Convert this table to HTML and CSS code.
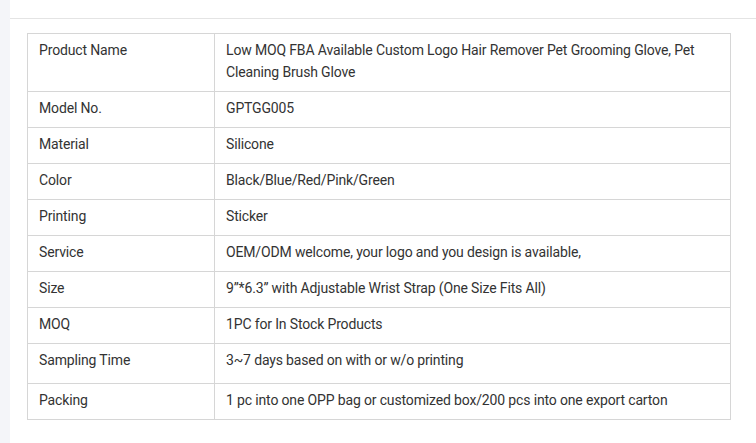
FILE: index.html
```html
<!DOCTYPE html>
<html lang="en">
<head>
<meta charset="utf-8">
<title>Product specifications</title>
<link rel="stylesheet" href="styles.css">
</head>
<body>
<div class="panel">
  <div class="panel-top"></div>
  <div class="panel-body">
    <table class="spec">
      <tbody>
        <tr><td class="key">Product Name</td><td class="val">Low MOQ FBA Available Custom Logo Hair Remover Pet Grooming Glove, Pet Cleaning Brush Glove</td></tr>
        <tr><td class="key">Model No.</td><td class="val">GPTGG005</td></tr>
        <tr><td class="key">Material</td><td class="val">Silicone</td></tr>
        <tr><td class="key">Color</td><td class="val">Black/Blue/Red/Pink/Green</td></tr>
        <tr><td class="key">Printing</td><td class="val">Sticker</td></tr>
        <tr><td class="key">Service</td><td class="val">OEM/ODM welcome, your logo and you design is available,</td></tr>
        <tr><td class="key">Size</td><td class="val">9”*6.3” with Adjustable Wrist Strap (One Size Fits All)</td></tr>
        <tr><td class="key">MOQ</td><td class="val">1PC for In Stock Products</td></tr>
        <tr class="tall"><td class="key">Sampling Time</td><td class="val">3~7 days based on with or w/o printing</td></tr>
        <tr><td class="key">Packing</td><td class="val">1 pc into one OPP bag or customized box/200 pcs into one export carton</td></tr>
      </tbody>
    </table>
  </div>
</div>
</body>
</html>
```
FILE: styles.css
```css
html, body {
  margin: 0;
  padding: 0;
}
body {
  background: #f4f5f9;
  font-family: Roboto, "Liberation Sans", Arial, sans-serif;
  font-size: 14px;
  letter-spacing: -0.15px;
  color: #333333;
  min-height: 443px;
}
.panel {
  margin-left: 10px;
  background: #ffffff;
  min-height: 443px;
}
.panel-top {
  height: 18px;
  border-bottom: 1px solid #e4e4e4;
}
.panel-body {
  padding: 14px 26px 0 17px;
}
.spec {
  width: 704px;
  border-collapse: collapse;
}
.spec td {
  border: 1px solid #d6d6d6;
  padding: 5px 11px 8px 11px;
  line-height: 22px;
  vertical-align: top;
  text-align: left;
}
.spec .key {
  width: 164px;
}
.spec .tall td {
  padding-bottom: 12px;
}
```
